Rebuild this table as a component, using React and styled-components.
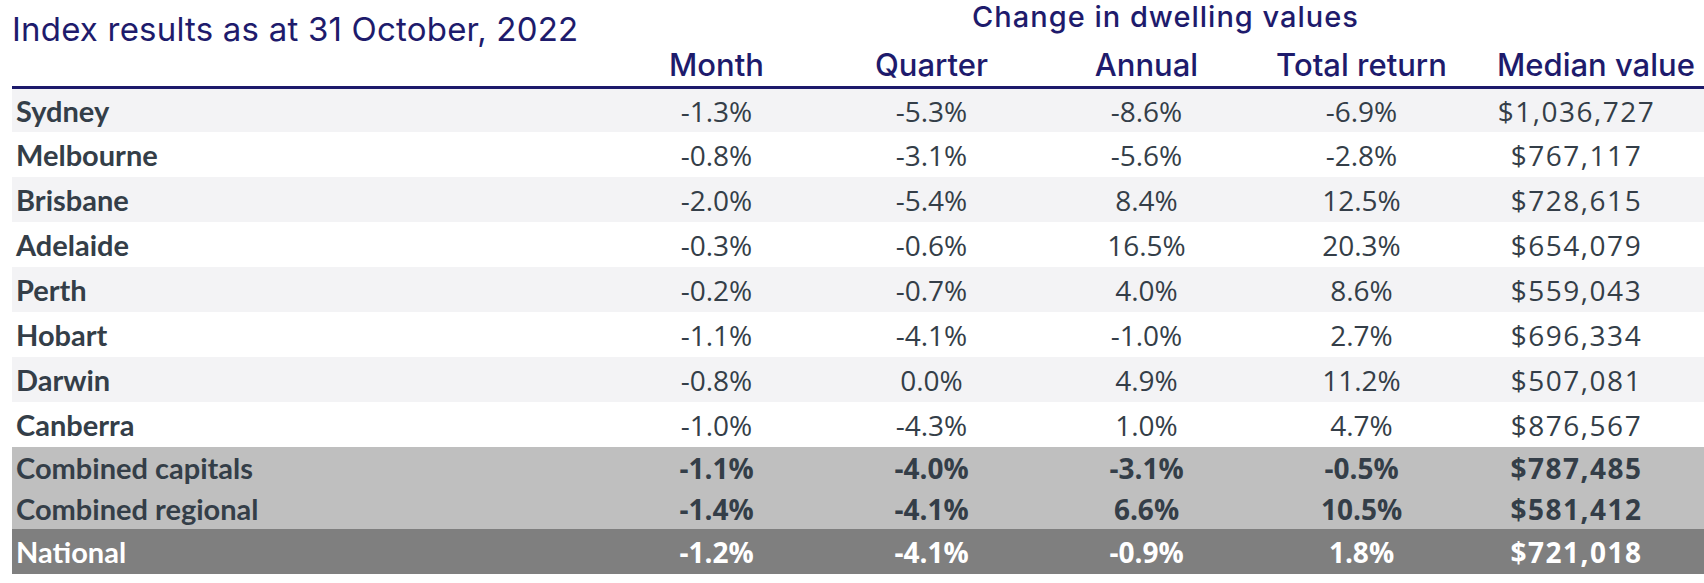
import React from "react";
import styled, { createGlobalStyle } from "styled-components";

const GlobalStyle = createGlobalStyle`
  html, body {
    margin: 0;
    padding: 0;
    background: #ffffff;
  }
  body {
    width: 1704px;
    height: 583px;
    overflow: hidden;
  }
`;

const columns = `597px repeat(5, 215px) 1fr`;

const Page = styled.div`
  padding-left: 12px;
`;

const Head = styled.div`
  display: grid;
  grid-template-columns: ${columns};
  grid-template-rows: 40px 46px;
  color: #1e1b6c;
  font-family: Inter, "Open Sans", sans-serif;
`;

const Title = styled.h1`
  grid-column: 1;
  grid-row: 1 / span 2;
  margin: 9px 0 0 0;
  font-size: 33px;
  font-weight: 400;
  line-height: 40px;
  letter-spacing: 0.2px;
  white-space: nowrap;
`;

const Group = styled.div`
  grid-column: 2 / span 5;
  grid-row: 1;
  padding-left: 38px;
  text-align: center;
  font-size: 29px;
  font-weight: 500;
  line-height: 34px;
  letter-spacing: 1px;
  white-space: nowrap;
`;

const ColHead = styled.div`
  grid-row: 2;
  padding-top: 8px;
  padding-left: ${(p) => p.$shift || 0}px;
  text-align: center;
  white-space: nowrap;
  font-size: 31px;
  font-weight: 500;
  line-height: 34px;
`;

const Rule = styled.div`
  height: 3px;
  background: #1c1a6b;
`;

const Body = styled.div`
  font-family: "Open Sans", Lato, sans-serif;
  font-size: 28px;
`;

const tones = {
  light: { bg: "#f3f3f5", fg: "#343e48" },
  plain: { bg: "#ffffff", fg: "#343e48" },
  sum: { bg: "#bfbfbf", fg: "#343e48" },
  total: { bg: "#7f7f7f", fg: "#ffffff" },
};

const Row = styled.div`
  display: grid;
  grid-template-columns: ${columns};
  align-items: center;
  height: ${(p) => p.$h}px;
  background: ${(p) => tones[p.$tone].bg};
  color: ${(p) => tones[p.$tone].fg};
  font-weight: ${(p) => (p.$bold ? 700 : 400)};
  white-space: nowrap;
`;

const Name = styled.div`
  padding-left: 4px;
  font-family: Lato, "Open Sans", sans-serif;
  font-size: 29px;
  font-weight: 700;
`;

const Cell = styled.div`
  text-align: center;
  letter-spacing: ${(p) => (p.$money ? "1.5px" : "0")};
`;

const headers = ["Month", "Quarter", "Annual", "Total return", "Median value"];

const rows = [
  ["Sydney", "-1.3%", "-5.3%", "-8.6%", "-6.9%", "$1,036,727"],
  ["Melbourne", "-0.8%", "-3.1%", "-5.6%", "-2.8%", "$767,117"],
  ["Brisbane", "-2.0%", "-5.4%", "8.4%", "12.5%", "$728,615"],
  ["Adelaide", "-0.3%", "-0.6%", "16.5%", "20.3%", "$654,079"],
  ["Perth", "-0.2%", "-0.7%", "4.0%", "8.6%", "$559,043"],
  ["Hobart", "-1.1%", "-4.1%", "-1.0%", "2.7%", "$696,334"],
  ["Darwin", "-0.8%", "0.0%", "4.9%", "11.2%", "$507,081"],
  ["Canberra", "-1.0%", "-4.3%", "1.0%", "4.7%", "$876,567"],
];

const totals = [
  { tone: "sum", h: 41, cells: ["Combined capitals", "-1.1%", "-4.0%", "-3.1%", "-0.5%", "$787,485"] },
  { tone: "sum", h: 41, cells: ["Combined regional", "-1.4%", "-4.1%", "6.6%", "10.5%", "$581,412"] },
  { tone: "total", h: 45, cells: ["National", "-1.2%", "-4.1%", "-0.9%", "1.8%", "$721,018"] },
];

const Line = ({ cells, ...rest }) => (
  <Row {...rest}>
    <Name>{cells[0]}</Name>
    {cells.slice(1).map((c, i) => (
      <Cell key={i} $money={i === 4}>
        {c}
      </Cell>
    ))}
  </Row>
);

export default function App() {
  return (
    <Page>
      <GlobalStyle />
      <Head>
        <Title>Index results as at 31 October, 2022</Title>
        <Group>Change in dwelling values</Group>
        {headers.map((h, i) => (
          <ColHead key={h} $shift={i === 4 ? 28 : 0}>
            {h}
          </ColHead>
        ))}
      </Head>
      <Rule />
      <Body>
        {rows.map((r, i) => (
          <Line
            key={r[0]}
            cells={r}
            $tone={i % 2 === 0 ? "light" : "plain"}
            $h={i === 0 ? 43 : 45}
          />
        ))}
        {totals.map((t) => (
          <Line key={t.cells[0]} cells={t.cells} $tone={t.tone} $h={t.h} $bold />
        ))}
      </Body>
    </Page>
  );
}
